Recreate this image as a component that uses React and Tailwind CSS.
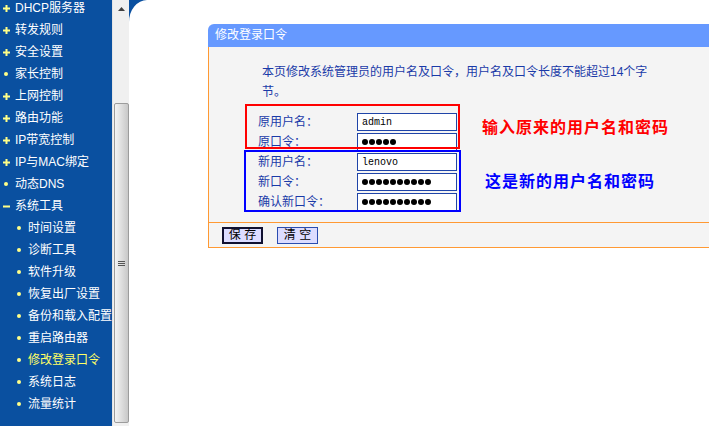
import React from "react";

const menu = [
  { label: "DHCP服务器", type: "plus" },
  { label: "转发规则", type: "plus" },
  { label: "安全设置", type: "plus" },
  { label: "家长控制", type: "dot" },
  { label: "上网控制", type: "plus" },
  { label: "路由功能", type: "plus" },
  { label: "IP带宽控制", type: "plus" },
  { label: "IP与MAC绑定", type: "plus" },
  { label: "动态DNS", type: "dot" },
  { label: "系统工具", type: "minus" },
  { label: "时间设置", type: "sub" },
  { label: "诊断工具", type: "sub" },
  { label: "软件升级", type: "sub" },
  { label: "恢复出厂设置", type: "sub" },
  { label: "备份和载入配置", type: "sub" },
  { label: "重启路由器", type: "sub" },
  { label: "修改登录口令", type: "sub", active: true },
  { label: "系统日志", type: "sub" },
  { label: "流量统计", type: "sub" },
];

function Icon({ type }) {
  if (type === "plus")
    return (
      <svg width="7" height="7" viewBox="0 0 7 7" className="ml-[2px] mr-[5px]">
        <rect x="2.5" y="0" width="2" height="7" fill="#ffff88" />
        <rect x="0" y="2.5" width="7" height="2" fill="#ffff88" />
      </svg>
    );
  if (type === "minus")
    return (
      <svg width="7" height="7" viewBox="0 0 7 7" className="ml-[2px] mr-[5px]">
        <rect x="0" y="2.5" width="7" height="2" fill="#ffff88" />
      </svg>
    );
  return <span className="ml-[3px] mr-[7px] w-[4px] h-[4px] rounded-full bg-[#ffff88]" />;
}

function Dots({ n }) {
  return (
    <div className="flex gap-[1px] pl-[4px]">
      {Array.from({ length: n }).map((_, i) => (
        <span key={i} className="w-[6px] h-[6px] rounded-full bg-black" />
      ))}
    </div>
  );
}

const rows = [
  { label: "原用户名：", value: "admin" },
  { label: "原口令：", dots: 5 },
  { label: "新用户名：", value: "lenovo" },
  { label: "新口令：", dots: 10 },
  { label: "确认新口令：", dots: 10 },
];

export default function App() {
  return (
    <div className="w-[709px] h-[426px] flex overflow-hidden bg-white [font-family:'Liberation_Sans','Noto_Sans_CJK_SC',sans-serif] text-[12px]">
      {/* sidebar */}
      <div className="w-[112px] shrink-0 bg-[#0a50a0] overflow-hidden">
        <div className="-mt-[3px]">
          {menu.map((m) => (
            <div
              key={m.label}
              className={
                "h-[22px] flex items-center whitespace-nowrap leading-none " +
                (m.type === "sub" ? "pl-[14px] " : "pl-[1px] ") +
                (m.active ? "text-[#ffff66]" : "text-white")
              }
            >
              <Icon type={m.type} />
              <span>{m.label}</span>
            </div>
          ))}
        </div>
      </div>

      {/* scrollbar */}
      <div className="w-[17px] shrink-0 bg-[#f0f0f0] border-l border-[#e4e4e4] flex flex-col items-center">
        <div className="h-[17px] flex items-center justify-center">
          <svg width="7" height="4" viewBox="0 0 7 4">
            <path d="M0 4 L3.5 0 L7 4 Z" fill="#404040" />
          </svg>
        </div>
        <div className="h-[86px]" />
        <div className="w-[15px] h-[320px] rounded-[2px] border border-[#9c9c9c] bg-gradient-to-r from-[#f4f4f4] to-[#c8c8c8] flex items-center justify-center">
          <div className="flex flex-col gap-[1px]">
            <span className="w-[7px] h-[1px] bg-[#555]" />
            <span className="w-[7px] h-[1px] bg-[#555]" />
            <span className="w-[7px] h-[1px] bg-[#555]" />
          </div>
        </div>
      </div>

      {/* main */}
      <div className="relative flex-1 overflow-hidden pt-[24px] pl-[79px]">
        <svg width="18" height="22" viewBox="0 0 18 22" className="absolute left-0 top-0">
          <path d="M0 0 H18 A18 22 0 0 0 0 22 Z" fill="#0a50a0" />
        </svg>

        <div className="w-[560px]">
          <div className="h-[23px] bg-[#6699ff] rounded-tl-[6px] pl-[7px] text-white leading-[23px]">
            修改登录口令
          </div>
          <div className="bg-[#f4f4f4] border-l border-b border-[#ff9933]">
            <div className="pl-[53px] pt-[15px]">
              <div className="w-[390px] leading-[20px] text-[#1a3aa8]">
                本页修改系统管理员的用户名及口令，用户名及口令长度不能超过14个字节。
              </div>
            </div>

            <div className="relative mt-[10px]">
              {rows.map((r) => (
                <div key={r.label} className="h-[20px] flex items-center">
                  <div className="pl-[49px] w-[148px] text-[#1a3aa8] whitespace-nowrap">{r.label}</div>
                  <div className="w-[100px] h-[18px] border border-[#1f44a8] bg-white flex items-center">
                    {r.dots ? (
                      <Dots n={r.dots} />
                    ) : (
                      <span className="pl-[4px] text-[10px] text-black [font-family:'Liberation_Mono',monospace]">
                        {r.value}
                      </span>
                    )}
                  </div>
                </div>
              ))}

              <div className="absolute left-[36px] -top-[8px] w-[215px] h-[45px] border-2 border-[#ff0000]" />
              <div className="absolute left-[35px] top-[38px] w-[217px] h-[62px] border-2 border-[#0000ff]" />

              <div className="absolute left-[273px] top-[6px] text-[16px] leading-[20px] font-bold tracking-[1px] text-[#ff0000] whitespace-nowrap">
                输入原来的用户名和密码
              </div>
              <div className="absolute left-[276px] top-[60px] text-[16px] leading-[20px] font-bold tracking-[1px] text-[#0000ff] whitespace-nowrap">
                这是新的用户名和密码
              </div>
            </div>

            <div className="mt-[10px] border-t border-[#ff9933] h-[25px] flex items-center pl-[13px] gap-[14px]">
              <button className="w-[41px] h-[17px] border-2 border-[#101030] bg-[#dcdcff] text-black leading-none flex items-center justify-center">
                保 存
              </button>
              <button className="w-[41px] h-[17px] border border-[#2a4cb0] bg-[#dcdcff] text-black leading-none flex items-center justify-center">
                清 空
              </button>
            </div>
          </div>
        </div>
      </div>
    </div>
  );
}
